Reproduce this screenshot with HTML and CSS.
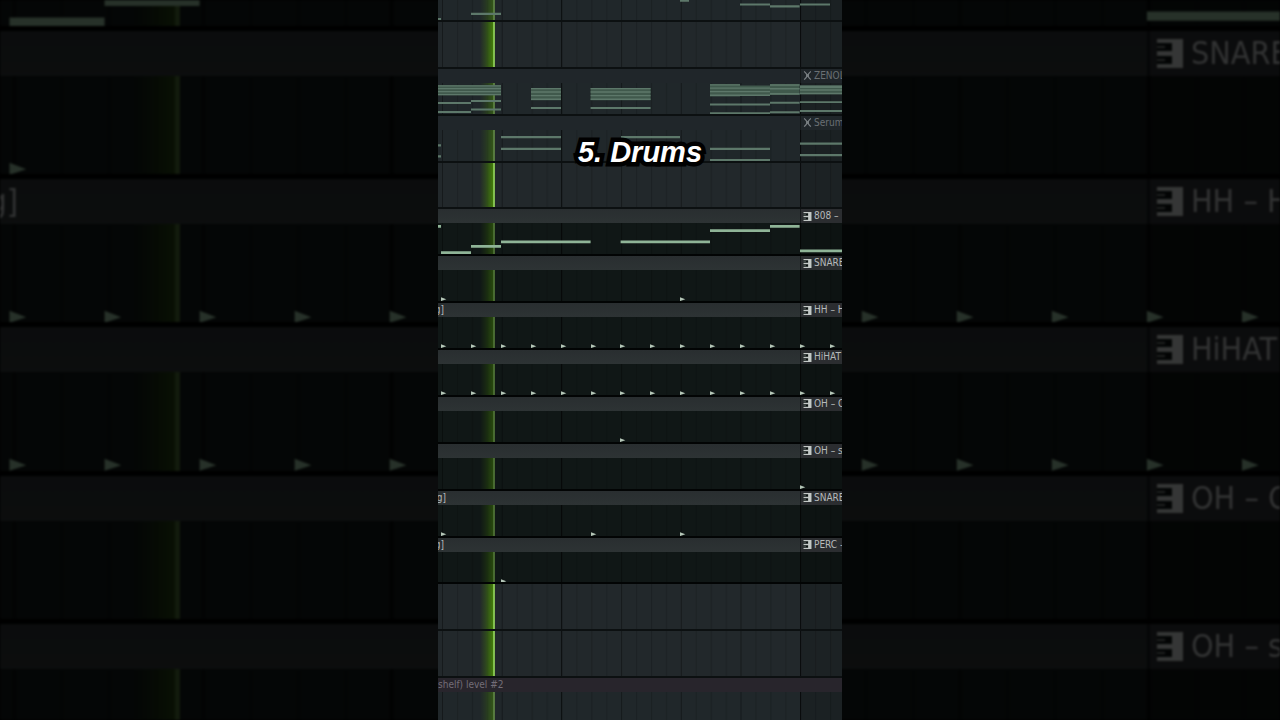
FILE: index.html
```html
<!DOCTYPE html>
<html lang="en">
<head>
    <meta charset="UTF-8">
    <meta name="viewport" content="width=device-width, initial-scale=1.0">
    <title>5. Drums</title>
    <link rel="stylesheet" href="styles.css">
</head>
<body>
    <!-- Shared shapes -->
    <svg class="shapes" width="0" height="0" aria-hidden="true">
        <defs>
            <pattern id="beats" x="4" width="59.7" height="47" patternUnits="userSpaceOnUse">
                <rect width="1" height="47" fill="#000" opacity="0.35"/>
                <rect x="15" width="1" height="47" fill="#000" opacity="0.16"/>
                <rect x="30" width="1" height="47" fill="#000" opacity="0.2"/>
                <rect x="45" width="1" height="47" fill="#000" opacity="0.16"/>
            </pattern>
            <linearGradient id="glow">
                <stop offset="0" stop-color="#4c9400" stop-opacity="0"/>
                <stop offset="0.4" stop-color="#4c9400" stop-opacity="0.25"/>
                <stop offset="1" stop-color="#4c9400" stop-opacity="0.8"/>
            </linearGradient>
            <g id="grid">
                <rect width="404" height="47" fill="url(#beats)"/>
                <rect x="123" width="1" height="47" fill="#000" opacity="0.45"/>
                <rect x="362" width="42" height="47" fill="#000" opacity="0.15"/>
                <rect x="362" width="1" height="47" fill="#000" opacity="0.5"/>
            </g>
            <g id="playhead">
                <rect x="42" width="13.3" height="47" fill="url(#glow)"/>
                <rect x="55.2" width="1.6" height="47" fill="#9be05c"/>
            </g>
            <path id="hit" d="M0 27.4L5.3 29.4L0 31.2Z"/>
            <path id="bassline" d="M0 1.9h3v2.8H0zM3 28.4h30V31H3zM33 22.1h30v2.8H33zM63 17.6h89.6v2.8H63zM182.6 17.6H272v2.8h-89.4zM272 6.2h60V9h-60zM332 1.9h29.6v2.8H332zM362 26.6h42v2.8h-42z"/>
            <g id="snare">
                <use href="#hit" x="3"/><use href="#hit" x="242"/>
            </g>
            <g id="hats">
                <use href="#hit" x="3"/><use href="#hit" x="33"/><use href="#hit" x="63"/><use href="#hit" x="93"/>
                <use href="#hit" x="123"/><use href="#hit" x="153"/><use href="#hit" x="182"/><use href="#hit" x="212"/>
                <use href="#hit" x="242"/><use href="#hit" x="272"/><use href="#hit" x="302"/><use href="#hit" x="332"/>
                <use href="#hit" x="362"/><use href="#hit" x="392"/>
            </g>
            <symbol id="keys" viewBox="0 0 26 29">
                <path fill="#0b1211" d="M0 0h26v29H0z"/>
                <path fill="currentColor" d="M0 0h26v29H0v-4h15v-8H0v-5h15V4H0z"/>
                <path fill="currentColor" opacity="0.6" d="M0 7h8v2H0zM0 20h8v2H0z"/>
            </symbol>
            <symbol id="synth" viewBox="0 0 16 18">
                <path fill="none" stroke="currentColor" stroke-width="2.4" d="M1 1c3 1 5 5 7 8s4 7 7 8M15 1c-3 1-5 5-7 8s-4 7-7 8"/>
                <path fill="currentColor" d="M5 5l3 2 3-2v8l-3-2-3 2z"/>
            </symbol>
        </defs>
    </svg>

    <main class="stage">
        <!-- Enlarged dim copy behind the clip -->
        <div class="backdrop" aria-hidden="true">
            <div class="row clip">
                <svg class="lane" viewBox="0 23.1 404 7.9" preserveAspectRatio="none"><use href="#grid"/><use class="head" href="#playhead"/><use href="#bassline"/></svg>
            </div>
            <div class="row clip">
                <div class="title"><span></span><span class="name"><svg><use href="#keys"/></svg>SNARE</span></div>
                <svg class="lane" viewBox="0 0 404 31" preserveAspectRatio="none"><use href="#grid"/><use class="head" href="#playhead"/><use href="#snare"/></svg>
            </div>
            <div class="row clip">
                <div class="title"><span class="tail">g]</span><span class="name"><svg><use href="#keys"/></svg>HH – H</span></div>
                <svg class="lane" viewBox="0 0 404 31" preserveAspectRatio="none"><use href="#grid"/><use class="head" href="#playhead"/><use href="#hats"/></svg>
            </div>
            <div class="row clip">
                <div class="title"><span></span><span class="name"><svg><use href="#keys"/></svg>HiHAT</span></div>
                <svg class="lane" viewBox="0 0 404 31" preserveAspectRatio="none"><use href="#grid"/><use class="head" href="#playhead"/><use href="#hats"/></svg>
            </div>
            <div class="row clip">
                <div class="title"><span></span><span class="name"><svg><use href="#keys"/></svg>OH – O</span></div>
                <svg class="lane" viewBox="0 0 404 31" preserveAspectRatio="none"><use href="#grid"/><use class="head" href="#playhead"/></svg>
            </div>
            <div class="row clip">
                <div class="title"><span></span><span class="name"><svg><use href="#keys"/></svg>OH – s</span></div>
                <svg class="lane" viewBox="0 0 404 16" preserveAspectRatio="none"><use href="#grid"/><use class="head" href="#playhead"/></svg>
            </div>
        </div>

        <!-- Playlist -->
        <section class="playlist">
            <div class="row muted">
                <svg class="lane" viewBox="0 0 404 20" preserveAspectRatio="none">
                    <use href="#grid"/><use class="head" href="#playhead"/>
                    <path d="M0 18h3v2H0zM33 12.8h30V15H33zM242 0h9v1.8h-9zM302 3.4h30v2.2h-30zM332 5.2h29.6v2.2H332zM362 3.4h30v2.2h-30z"/>
                </svg>
            </div>
            <div class="row">
                <svg class="lane" viewBox="0 0 404 45" preserveAspectRatio="none"><use href="#grid"/><use class="head" href="#playhead"/></svg>
            </div>
            <div class="row muted">
                <div class="title"><span></span><span class="name"><svg><use href="#synth"/></svg>ZENOL</span></div>
                <svg class="lane" viewBox="0 0 404 31" preserveAspectRatio="none">
                    <use href="#grid"/><use class="head" href="#playhead"/>
                    <path class="chord" d="M0 2.2h63v10H0zM93 5h30v12.2H93zM152.6 5h60v12.2h-60zM272 1.2h30v1.4h30V12h-30v1.5h-30zM332 1.2h29.6v10.6H332zM362 2.4h42v9h-42z"/>
                    <path d="M0 2.2h63v1.4H0zM0 5h63v1.4H0zM0 8h63v1.4H0zM0 11h63v1.4H0zM93 5h30v1.4H93zM93 8.3h30v1.4H93zM93 12h30v1.4H93zM93 15.6h30V17H93zM152.6 5h60v1.4h-60zM152.6 8.3h60v1.4h-60zM152.6 12h60v1.4h-60zM152.6 15.6h60V17h-60zM272 1.2h30v1.4h-30zM272 4.4h60v1.4h-60zM272 8h60v1.4h-60zM272 11.6h60V13h-60zM332 1.2h29.6v1.6H332zM332 5h29.6v1.6H332zM332 10h29.6v1.8H332zM362 2.4h42V5h-42zM362 6.2h42v1.6h-42zM362 9.8h42v1.6h-42z"/>
                    <path d="M0 19.2h33v2H0zM33 17h30v2H33zM0 28.2h33v2H0zM33 25.6h30v2H33zM93 24.2h30v2H93zM152.6 24.2h60v2h-60zM272 20.6h60v2h-60zM272 29.4h60v1.6h-60zM332 18.8h29.6v2H332zM332 28.4h29.6v2H332zM362 18.2h42v2h-42zM362 27.2h42v2h-42z"/>
                </svg>
            </div>
            <div class="row muted">
                <div class="title"><span></span><span class="name"><svg><use href="#synth"/></svg>Serum</span></div>
                <svg class="lane" viewBox="0 0 404 31" preserveAspectRatio="none">
                    <use href="#grid"/><use class="head" href="#playhead"/>
                    <path d="M0 14.4h3v2.2H0zM0 25.4h3v2.2H0zM63 6h60v2.2H63zM63 17.8h60V20H63zM183 6h59v2.2h-59zM272 17.8h60V20h-60zM272 29h60v2h-60zM362 12.6h42v2.2h-42zM362 24.2h42v2.2h-42z"/>
                </svg>
            </div>
            <div class="row">
                <svg class="lane" viewBox="0 0 404 45" preserveAspectRatio="none"><use href="#grid"/><use class="head" href="#playhead"/></svg>
            </div>
            <div class="row clip">
                <div class="title"><span></span><span class="name"><svg><use href="#keys"/></svg>808 –</span></div>
                <svg class="lane" viewBox="0 0 404 31" preserveAspectRatio="none"><use href="#grid"/><use class="head" href="#playhead"/><use href="#bassline"/></svg>
            </div>
            <div class="row clip">
                <div class="title"><span></span><span class="name"><svg><use href="#keys"/></svg>SNARE</span></div>
                <svg class="lane" viewBox="0 0 404 31" preserveAspectRatio="none"><use href="#grid"/><use class="head" href="#playhead"/><use class="hits" href="#snare"/></svg>
            </div>
            <div class="row clip">
                <div class="title"><span class="tail">g]</span><span class="name"><svg><use href="#keys"/></svg>HH – H</span></div>
                <svg class="lane" viewBox="0 0 404 31" preserveAspectRatio="none"><use href="#grid"/><use class="head" href="#playhead"/><use class="hits" href="#hats"/></svg>
            </div>
            <div class="row clip">
                <div class="title"><span></span><span class="name"><svg><use href="#keys"/></svg>HiHAT</span></div>
                <svg class="lane" viewBox="0 0 404 31" preserveAspectRatio="none"><use href="#grid"/><use class="head" href="#playhead"/><use class="hits" href="#hats"/></svg>
            </div>
            <div class="row clip">
                <div class="title"><span></span><span class="name"><svg><use href="#keys"/></svg>OH – O</span></div>
                <svg class="lane" viewBox="0 0 404 31" preserveAspectRatio="none"><use href="#grid"/><use class="head" href="#playhead"/><use class="hits" href="#hit" x="182"/></svg>
            </div>
            <div class="row clip">
                <div class="title"><span></span><span class="name"><svg><use href="#keys"/></svg>OH – s</span></div>
                <svg class="lane" viewBox="0 0 404 31" preserveAspectRatio="none"><use href="#grid"/><use class="head" href="#playhead"/><use class="hits" href="#hit" x="362"/></svg>
            </div>
            <div class="row clip">
                <div class="title"><span class="tail wide">g]</span><span class="name"><svg><use href="#keys"/></svg>SNARE</span></div>
                <svg class="lane" viewBox="0 0 404 31" preserveAspectRatio="none"><use href="#grid"/><use class="head" href="#playhead"/><g class="hits"><use href="#hit" x="3"/><use href="#hit" x="153"/><use href="#hit" x="242"/></g></svg>
            </div>
            <div class="row clip">
                <div class="title"><span class="tail">g]</span><span class="name"><svg><use href="#keys"/></svg>PERC –</span></div>
                <svg class="lane" viewBox="0 0 404 31" preserveAspectRatio="none"><use href="#grid"/><use class="head" href="#playhead"/><use class="hits" href="#hit" x="63"/></svg>
            </div>
            <div class="row">
                <svg class="lane" viewBox="0 0 404 45" preserveAspectRatio="none"><use href="#grid"/><use class="head" href="#playhead"/></svg>
            </div>
            <div class="row">
                <svg class="lane" viewBox="0 0 404 45" preserveAspectRatio="none"><use href="#grid"/><use class="head" href="#playhead"/></svg>
            </div>
            <div class="row muted automation">
                <div class="title"><span>shelf) level #2</span></div>
                <svg class="lane" viewBox="0 0 404 28" preserveAspectRatio="none"><use href="#grid"/><use class="head" href="#playhead"/></svg>
            </div>
            <h1 class="caption">5. Drums</h1>
        </section>
    </main>
</body>
</html>
```

FILE: styles.css
```css
* {
    box-sizing: border-box;
    margin: 0;
    padding: 0;
}

body {
    background-color: #000;
    color: #b6babb;
    font-family: "DejaVu Sans Condensed", "Liberation Sans", sans-serif;
}

.shapes {
    position: absolute;
}

.stage {
    display: grid;
    height: 100vh;
    overflow: hidden;
}

/* Both layers share the one grid cell */
.backdrop,
.playlist {
    grid-area: 1 / 1;
    display: grid;
    min-height: 0;
}

.backdrop {
    grid-template-rows: 31fr repeat(4, 148fr) 96fr;
    opacity: 0.27;
    filter: blur(1px);
    font-size: 32px;
}

.playlist {
    position: relative;
    justify-self: center;
    height: 100vh;
    aspect-ratio: 101 / 180;
    grid-template-rows: 22fr repeat(14, 47fr) 42fr;
    background-color: #0a0e0f;
    font-size: 10px;
    overflow: hidden;
}

/* Track rows */
.row {
    display: flex;
    flex-direction: column;
    min-width: 0;
    min-height: 0;
    border-bottom: 2px solid #0c1011;
    background-color: #22282b;
}

.backdrop .row {
    border-bottom: 5px solid #000;
}

.backdrop .row:last-child,
.playlist .automation {
    border-bottom: 0;
}

.lane {
    display: block;
    flex: 1;
    width: 100%;
    min-height: 0;
}

.muted {
    background-color: #20272a;
}

.muted .lane {
    fill: #5d786a;
}

.muted .head {
    opacity: 0.55;
}

.chord {
    fill: #40594c;
}

.clip {
    background-color: #101716;
    border-bottom-color: #020404;
}

.clip .lane {
    fill: #8fb497;
}

.clip .hits {
    fill: #b4c6b7;
}

.clip .head {
    opacity: 0.5;
}

.backdrop .head {
    opacity: 0.38;
}

/* Clip titles */
.title {
    display: grid;
    grid-template-columns: 362fr 42fr;
    flex: none;
    height: 14px;
    line-height: 14px;
    white-space: nowrap;
    overflow: hidden;
    background: linear-gradient(#292e30, #2d3334);
}

.backdrop .title {
    height: 45px;
    line-height: 45px;
}

.muted .title {
    background: #20262a;
    color: #6a7074;
}

.automation .title {
    background: #28252c;
    color: #736d77;
}

.name {
    display: flex;
    align-items: center;
    gap: 2px;
    min-width: 0;
    padding-left: 2px;
    overflow: hidden;
    border-left: 1px solid #15191a;
    background-color: #2b2d30;
}

.muted .name {
    background-color: #20262a;
}

.name svg {
    flex: none;
    width: 9px;
    height: 9px;
    color: #c3c8c6;
}

.muted .name svg {
    color: #777d80;
}

.backdrop .name {
    gap: 8px;
    padding-left: 7px;
    border-left-width: 3px;
}

.backdrop .name svg {
    width: 26px;
    height: 29px;
}

.tail {
    display: flex;
    justify-content: flex-end;
    width: 6px;
    overflow: hidden;
}

.tail.wide {
    width: 8px;
}

.backdrop .tail {
    width: 18px;
}

/* Caption over the playlist */
.caption {
    position: absolute;
    top: 19%;
    left: 0;
    right: 0;
    text-align: center;
    font: italic bold 29px/30px "Liberation Sans", Arial, sans-serif;
    color: #fff;
    -webkit-text-stroke: 9px #000;
    paint-order: stroke fill;
}
```
